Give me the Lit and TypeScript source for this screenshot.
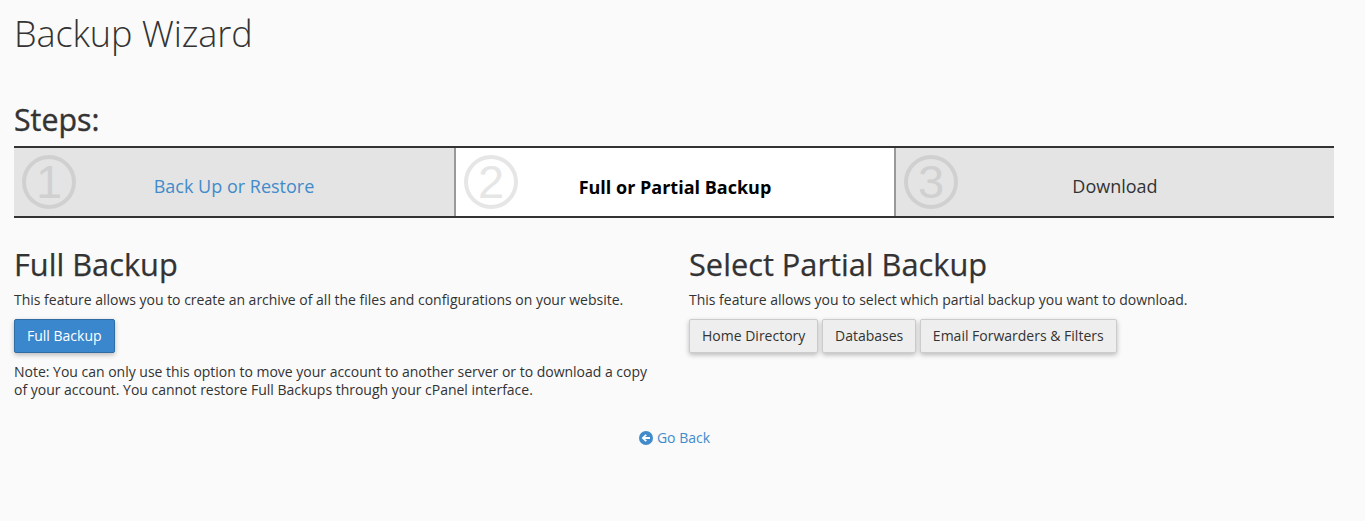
import { LitElement, html, css } from "lit";
import { customElement } from "lit/decorators.js";

@customElement("app-root")
export class AppRoot extends LitElement {
  static styles = css`
    :host {
      display: block;
      min-height: 521px;
      background: #fafafa;
      font-family: "Open Sans", sans-serif;
      font-size: 14px;
      line-height: 20px;
      color: #333;
      box-sizing: border-box;
      padding: 0 31px 0 14px;
    }
    h1 {
      margin: 0;
      padding-top: 11px;
      font-weight: 300;
      font-size: 36px;
      line-height: 46px;
      height: 87px;
      letter-spacing: -0.08px;
    }
    h2 {
      margin: 0;
      font-weight: 400;
      font-size: 30.75px;
      line-height: 38px;
      color: #333;
      -webkit-text-stroke: 0.25px #333;
    }
    h2.steps-title {
      font-size: 30.3px;
      line-height: 40px;
      padding-top: 2px;
      height: 46px;
      -webkit-text-stroke: 0.4px #333;
    }
    .steps {
      display: grid;
      grid-template-columns: 440px 440px 440px;
      height: 72px;
      box-sizing: border-box;
      border-top: 2px solid #333;
      border-bottom: 2px solid #333;
    }
    .step {
      position: relative;
      display: flex;
      align-items: center;
      justify-content: center;
      background: #e4e4e4;
      font-size: 18px;
      box-sizing: border-box;
    }
    .step + .step { border-left: 2px solid #999; }
    .step.active {
      background: #fff;
      color: #000;
      font-weight: 700;
    }
    .step a { color: #428bca; text-decoration: none; }
    .label { padding-top: 8px; }
    .step.active .label { padding-top: 10px; }
    .num {
      position: absolute;
      left: 8px;
      top: 7px;
      width: 54px;
      height: 54px;
      box-sizing: border-box;
      border: 4px solid #d0d0d0;
      border-radius: 50%;
      color: #d0d0d0;
      font-family: "Liberation Sans", sans-serif;
      font-weight: 400;
      font-size: 47px;
      line-height: 46px;
      text-align: center;
    }
    .active .num { border-color: #e6e6e6; color: #e6e6e6; }
    .columns {
      display: grid;
      grid-template-columns: 675px 645px;
      padding-top: 27px;
    }
    .col-left { padding-right: 15px; }
    p { margin: 0; letter-spacing: -0.01px; }
    .lead { padding-top: 7px; height: 20px; }
    .btns { display: flex; gap: 3.64px; margin-top: 9px; }
    .btn {
      height: 34px;
      box-sizing: border-box;
      padding: 6px 12px;
      border: 1px solid #ccc;
      border-radius: 2px;
      background: #eee;
      color: #333;
      font: inherit;
      box-shadow: 0 2px 5px rgba(0, 0, 0, 0.26);
    }
    .btn.primary {
      background: #3a87cd;
      border-color: #2e6da4;
      color: #fff;
    }
    .note { margin-top: 10px; line-height: 18px; width: 640px; }
    .back {
      display: flex;
      justify-content: center;
      align-items: center;
      gap: 4px;
      margin-top: 29px;
      padding-left: 1px;
      color: #428bca;
    }
    .back svg { display: block; }
  `;

  render() {
    return html`
      <h1>Backup Wizard</h1>
      <h2 class="steps-title">Steps:</h2>
      <div class="steps">
        <div class="step link">
          <span class="num">1</span>
          <a class="label" href="#">Back Up or Restore</a>
        </div>
        <div class="step active">
          <span class="num">2</span>
          <span class="label">Full or Partial Backup</span>
        </div>
        <div class="step plain">
          <span class="num">3</span>
          <span class="label">Download</span>
        </div>
      </div>
      <div class="columns">
        <div class="col-left">
          <h2>Full Backup</h2>
          <p class="lead">This feature allows you to create an archive of all the files and configurations on your website.</p>
          <div class="btns"><button class="btn primary">Full Backup</button></div>
          <p class="note">Note: You can only use this option to move your account to another server or to download a copy of your account. You cannot restore Full Backups through your cPanel interface.</p>
        </div>
        <div>
          <h2>Select Partial Backup</h2>
          <p class="lead">This feature allows you to select which partial backup you want to download.</p>
          <div class="btns">
            <button class="btn">Home Directory</button>
            <button class="btn">Databases</button>
            <button class="btn">Email Forwarders &amp; Filters</button>
          </div>
        </div>
      </div>
      <div class="back">
        <svg width="14" height="14" viewBox="0 0 14 14">
          <circle cx="7" cy="7" r="7" fill="#428bca"></circle>
          <path d="M2.6 7 L6.6 3.2 L7.9 4.5 L6 6 H11 V8 H6 L7.9 9.5 L6.6 10.8 Z" fill="#fff"></path>
        </svg>
        <span>Go Back</span>
      </div>
    `;
  }
}
